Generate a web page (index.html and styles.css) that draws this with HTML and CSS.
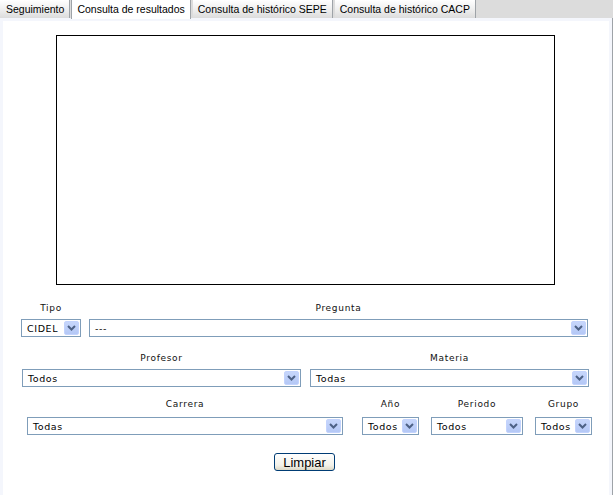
FILE: index.html
```html
<!DOCTYPE html>
<html lang="es">

<head>
    <meta charset="UTF-8">
    <title>Consulta de resultados</title>
    <link rel="stylesheet" href="styles.css">
</head>

<body>
    <!--Pestañas-->
    <div class="tabs">
        <div class="tab">Seguimiento</div>
        <div class="tab active">Consulta de resultados</div>
        <div class="tab">Consulta de histórico SEPE</div>
        <div class="tab">Consulta de histórico CACP</div>
    </div>

    <div class="panel">
        <div class="chart"></div>

        <!--Filtros-->
        <div class="row row-1">
            <div class="field w-tipo">
                <label>Tipo</label>
                <div class="select"><span>CIDEL</span><span class="arrow"><svg width="9" height="6" viewBox="0 0 9 6"><path d="M1 1 L4.5 4.5 L8 1" fill="none" stroke="#4d6185" stroke-width="2"/></svg></span></div>
            </div>
            <div class="field w-pregunta">
                <label>Pregunta</label>
                <div class="select"><span>---</span><span class="arrow"><svg width="9" height="6" viewBox="0 0 9 6"><path d="M1 1 L4.5 4.5 L8 1" fill="none" stroke="#4d6185" stroke-width="2"/></svg></span></div>
            </div>
        </div>

        <div class="row row-2">
            <div class="field w-half">
                <label>Profesor</label>
                <div class="select"><span>Todos</span><span class="arrow"><svg width="9" height="6" viewBox="0 0 9 6"><path d="M1 1 L4.5 4.5 L8 1" fill="none" stroke="#4d6185" stroke-width="2"/></svg></span></div>
            </div>
            <div class="field w-half">
                <label>Materia</label>
                <div class="select"><span>Todas</span><span class="arrow"><svg width="9" height="6" viewBox="0 0 9 6"><path d="M1 1 L4.5 4.5 L8 1" fill="none" stroke="#4d6185" stroke-width="2"/></svg></span></div>
            </div>
        </div>

        <div class="row row-3">
            <div class="field w-carrera">
                <label>Carrera</label>
                <div class="select"><span>Todas</span><span class="arrow"><svg width="9" height="6" viewBox="0 0 9 6"><path d="M1 1 L4.5 4.5 L8 1" fill="none" stroke="#4d6185" stroke-width="2"/></svg></span></div>
            </div>
            <div class="field w-small f-anio">
                <label>Año</label>
                <div class="select"><span>Todos</span><span class="arrow"><svg width="9" height="6" viewBox="0 0 9 6"><path d="M1 1 L4.5 4.5 L8 1" fill="none" stroke="#4d6185" stroke-width="2"/></svg></span></div>
            </div>
            <div class="field w-periodo">
                <label>Periodo</label>
                <div class="select"><span>Todos</span><span class="arrow"><svg width="9" height="6" viewBox="0 0 9 6"><path d="M1 1 L4.5 4.5 L8 1" fill="none" stroke="#4d6185" stroke-width="2"/></svg></span></div>
            </div>
            <div class="field w-small">
                <label>Grupo</label>
                <div class="select"><span>Todos</span><span class="arrow"><svg width="9" height="6" viewBox="0 0 9 6"><path d="M1 1 L4.5 4.5 L8 1" fill="none" stroke="#4d6185" stroke-width="2"/></svg></span></div>
            </div>
        </div>

        <div class="actions">
            <button>Limpiar</button>
        </div>
    </div>
</body>

</html>
```

FILE: styles.css
```css
body {
    margin: 0;
    width: 613px;
    height: 495px;
    background-color: #ffffff;
    font-family: "DejaVu Sans", Verdana, sans-serif;
    color: #000000;
    overflow: hidden;
}

.tabs {
    display: flex;
    height: 18px;
    background-color: #dcdcdc;
    font-family: "Liberation Sans", Arial, sans-serif;
    font-size: 10.5px;
}

.tab {
    height: 18px;
    line-height: 18px;
    padding: 0 5px;
    margin-right: 2px;
    box-sizing: border-box;
    border-right: 1px solid #9ea3a8;
    background: linear-gradient(#ffffff, #ececec 60%, #dcdcdc);
}

.tab:first-child {
    padding: 0 5px 0 6px;
}

.tab.active {
    background: #ffffff;
    border-left: 1px solid #9ea3a8;
    padding: 0 5px;
    height: 19px;
    margin-left: -1px;
}

.panel {
    height: 477px;
    box-sizing: border-box;
    border-top: 3px solid #f4f6fc;
    border-left: 3px solid #f4f6fc;
    border-right: 3px solid #f4f6fc;
    box-shadow: 1px 0 0 #9ea3a8;
    width: 612px;
}

.chart {
    width: 497px;
    height: 248px;
    margin: 14px 0 0 53px;
    border: 1px solid #000000;
}

.row {
    display: flex;
}

.row-1 {
    margin: 17px 0 0 18px;
    gap: 8px;
}

.row-2 {
    margin: 15px 0 0 19px;
    gap: 9px;
}

.row-3 {
    margin: 11px 0 0 24px;
    gap: 12px;
}

.field {
    display: flex;
    flex-direction: column;
    align-items: center;
}

.field label {
    font-size: 9px;
    letter-spacing: 0.7px;
    color: #111111;
    height: 13px;
    line-height: 13px;
    margin-bottom: 4px;
}

.row-3 .field label {
    margin-bottom: 6px;
}

.w-tipo { width: 60px; }
.w-pregunta { width: 499px; }
.w-half { width: 279px; }
.w-carrera { width: 316px; }
.w-small { width: 57px; }
.w-periodo { width: 92px; }
.f-anio { margin-left: 7px; }

.select {
    display: flex;
    align-items: center;
    justify-content: space-between;
    width: 100%;
    height: 18px;
    box-sizing: border-box;
    border: 1px solid #7f9db9;
    background-color: #ffffff;
    font-size: 9.5px;
    letter-spacing: 0.6px;
    padding: 0 1px 0 5px;
}

.arrow {
    display: flex;
    align-items: center;
    justify-content: center;
    width: 15px;
    height: 14px;
    box-sizing: border-box;
    border: 1px solid #c3d3fd;
    border-radius: 2px;
    background: linear-gradient(#c6d6fb, #b4c8f6);
}

.actions {
    display: flex;
    justify-content: center;
    margin: 18px 0 0 -3px;
}

button {
    font-family: "Liberation Sans", Arial, sans-serif;
    font-size: 13px;
    width: 61px;
    height: 18px;
    padding: 0;
    border: 1px solid #003c74;
    border-radius: 3px;
    background: linear-gradient(#ffffff, #f3f2ea 70%, #dcd8c6);
    color: #000000;
    line-height: 15px;
}
```
